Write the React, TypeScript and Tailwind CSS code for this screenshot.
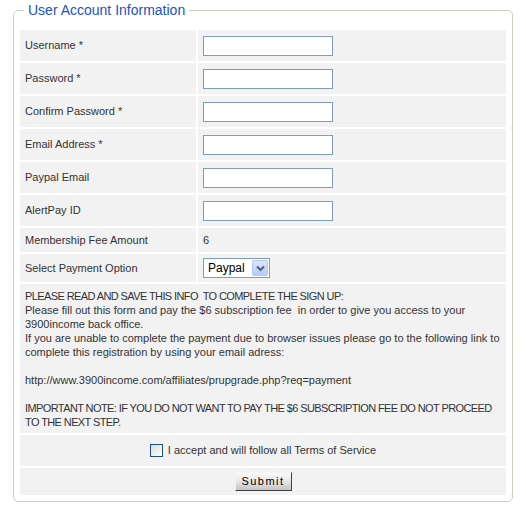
import { useState } from 'react';

const fields = [
  { label: 'Username *', type: 'text' },
  { label: 'Password *', type: 'password' },
  { label: 'Confirm Password *', type: 'password' },
  { label: 'Email Address *', type: 'text' },
  { label: 'Paypal Email', type: 'text' },
  { label: 'AlertPay ID', type: 'text' },
];

// caps lines render narrower in the original, so they get tighter tracking
const infoLines = [
  { text: 'PLEASE READ AND SAVE THIS INFO\u00a0 TO COMPLETE THE SIGN UP:', caps: true },
  { text: 'Please fill out this form and pay the $6 subscription fee\u00a0 in order to give you access to your' },
  { text: '3900income back office.' },
  { text: 'If you are unable to complete the payment due to browser issues please go to the following link to' },
  { text: 'complete this registration by using your email adress:' },
  { text: '' },
  { text: 'http://www.3900income.com/affiliates/prupgrade.php?req=payment' },
  { text: '' },
  { text: 'IMPORTANT NOTE: IF YOU DO NOT WANT TO PAY THE $6 SUBSCRIPTION FEE DO NOT PROCEED', caps: true },
  { text: 'TO THE NEXT STEP.', caps: true },
];

const App = () => {
  const [accepted, setAccepted] = useState(false);

  return (
    <div className="min-h-[512px] bg-white pl-[13px] pt-[2px] font-['Liberation_Sans',Arial,sans-serif]">
      <fieldset className="w-[500px] rounded-[5px] border border-[#d0d0bf] px-[6px] pt-[11px] pb-[6px]">
        <legend className="ml-[4px] px-[4px] text-[14px] leading-[17px] text-[#2152c4]">
          User Account Information
        </legend>

        <div className="grid grid-cols-[176px_1fr] gap-[2px] text-[11px] text-[#333]">
          {fields.map((f) => (
            <div key={f.label} className="contents">
              <div className="flex h-[31px] items-center bg-[#f2f2f2] pl-[5px]">{f.label}</div>
              <div className="flex h-[31px] items-center bg-[#f2f2f2] pl-[5px]">
                <input
                  type={f.type}
                  className="h-[20px] w-[130px] border border-[#7f9db9] bg-white px-[2px] text-[11px] outline-none"
                />
              </div>
            </div>
          ))}

          <div className="flex h-[24px] items-center bg-[#f2f2f2] pl-[5px]">Membership Fee Amount</div>
          <div className="flex h-[24px] items-center bg-[#f2f2f2] pl-[5px]">6</div>

          <div className="flex h-[28px] items-center bg-[#f2f2f2] pl-[5px]">Select Payment Option</div>
          <div className="flex h-[28px] items-center bg-[#f2f2f2] pl-[5px]">
            <div className="relative h-[20px] w-[67px] border border-[#7f9db9] bg-white">
              <select className="h-full w-full appearance-none bg-transparent pl-[4px] text-[12px] text-black outline-none">
                <option>Paypal</option>
                <option>AlertPay</option>
              </select>
              <span className="pointer-events-none absolute top-px right-px flex h-[16px] w-[16px] items-center justify-center rounded-[2px] border border-[#b4c8f5] bg-gradient-to-b from-[#dce6fd] to-[#b6cbf8]">
                <svg width="9" height="7" viewBox="0 0 9 7">
                  <path d="M1 1.5 L4.5 5 L8 1.5" fill="none" stroke="#4d6185" strokeWidth="2" />
                </svg>
              </span>
            </div>
          </div>

          <div className="col-span-2 bg-[#f2f2f2] px-[5px] pt-[5px] pb-[4px] leading-[14px]">
            {infoLines.map((line, i) => (
              <div
                key={i}
                className={`h-[14px] whitespace-nowrap ${line.caps ? 'tracking-[-0.6px]' : ''}`}
              >
                {line.text}
              </div>
            ))}
          </div>

          <div className="col-span-2 flex h-[31px] items-center justify-center gap-[5px] bg-[#f2f2f2]">
            <button
              type="button"
              onClick={() => setAccepted(!accepted)}
              className="flex h-[13px] w-[13px] items-center justify-center border border-[#1c5180] bg-gradient-to-br from-[#dcdcd7] to-white"
            >
              {accepted && (
                <svg width="9" height="9" viewBox="0 0 9 9">
                  <path d="M1 4.5 L3.5 7 L8 1.5" fill="none" stroke="#21a121" strokeWidth="2" />
                </svg>
              )}
            </button>
            <span>I accept and will follow all Terms of Service</span>
          </div>

          <div className="col-span-2 flex h-[27px] items-center justify-center bg-[#f2f2f2]">
            <button
              type="submit"
              className="h-[19px] w-[57px] border border-t-[#f4f4f4] border-l-[#f4f4f4] border-r-[#404040] border-b-[#404040] bg-gradient-to-b from-[#fafafa] via-[#e6e6e6] to-[#c4c4c4] text-[11px] leading-[15px] tracking-[1.5px] text-black"
            >
              Submit
            </button>
          </div>
        </div>
      </fieldset>
    </div>
  );
};

export default App;
